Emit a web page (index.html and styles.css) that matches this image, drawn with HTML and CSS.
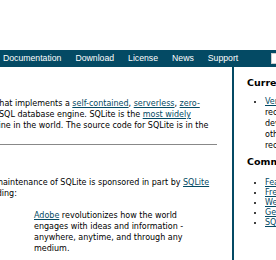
FILE: index.html
```html
<!DOCTYPE html>
<html lang="en">
<head>
    <meta charset="UTF-8">
    <title>SQLite Home Page</title>
    <link rel="stylesheet" href="styles.css">
</head>
<body>

<div class="banner"></div>

<nav class="menu">
    <a href="#">Documentation</a>
    <a href="#">Download</a>
    <a href="#">License</a>
    <a href="#">News</a>
    <a href="#">Support</a>
    <input class="search" type="text">
</nav>

<div class="main">
    <div class="content">
        <p class="intro">SQLite is a software library that implements a <a href="#">self-contained</a>, <a href="#">serverless</a>, <a href="#">zero-configuration</a>, <a href="#">transactional</a> SQL database engine. SQLite is the <a href="#">most widely deployed</a> SQL database engine in the world. The source code for SQLite is in the <a href="#">public domain</a>.</p>
        <hr>
        <p class="sponsors">Ongoing development and maintenance of SQLite is sponsored in part by <a href="#">SQLite Consortium</a> members, including:</p>
        <div class="sponsor">
            <div class="sponsor-logo"></div>
            <p><a href="#">Adobe</a> revolutionizes how the world engages with ideas and information - anywhere, anytime, and through any medium.</p>
        </div>
    </div>

    <div class="sidebar">
        <h3>Current Status</h3>
        <ul class="status">
            <li><a href="#">Version 3.7.4</a> of SQLite is<br>recommended for all new<br>development. Upgrading from all<br>other SQLite versions is<br>recommended.</li>
        </ul>
        <h3 class="second">Common Links</h3>
        <ul class="links">
            <li><a href="#">Features</a></li>
            <li><a href="#">Frequently Asked Questions</a></li>
            <li><a href="#">Well-known Users</a></li>
            <li><a href="#">Getting Started</a></li>
            <li><a href="#">SQL Syntax</a></li>
        </ul>
    </div>
</div>

</body>
</html>
```

FILE: styles.css
```css
/* Page frame */
html, body {
    margin: 0;
    overflow: hidden;
}
body {
    font-family: Verdana, "DejaVu Sans", sans-serif;
    font-size: 8px;
    line-height: 11px;
    color: #000;
    background-color: #fff;
}
a {
    color: #044a64;
}

.banner {
    height: 50px;
}

/* Top menu */
.menu {
    display: flex;
    align-items: center;
    gap: 14px;
    height: 17px;
    padding-left: 3px;
    background-color: #044a64;
    overflow: hidden;
}
.menu a {
    flex: none;
    font-family: Helvetica, "Liberation Sans", sans-serif;
    font-size: 8.7px;
    color: #fff;
    text-decoration: none;
}
.search {
    flex: none;
    width: 80px;
    height: 9px;
    margin-left: 19px;
    padding: 0;
    border: 1px solid #ccc;
    background-color: #fff;
}

/* Columns */
.main {
    display: flex;
    min-height: 193px;
}
.content {
    flex: none;
    width: 331px;
    margin-left: -114px;
}
.content p {
    margin: 0;
}
.intro {
    padding-top: 31px;
}
hr {
    margin: 2px 0 0;
    border: none;
    border-top: 1px solid #888;
}
.content .sponsors {
    margin-top: 32px;
}
.sponsor {
    display: flex;
    margin-top: 11px;
}
.sponsor-logo {
    flex: none;
    width: 148px;
}
.sponsor p {
    width: 160px;
}

/* Right column */
.sidebar {
    flex: none;
    width: 200px;
    margin-left: 15px;
    padding-left: 13px;
    border-left: 2px solid #044a64;
}
.sidebar h3 {
    margin: 10px 0 0;
    font-size: 9.5px;
    line-height: 12px;
}
.sidebar .second {
    margin-top: 5px;
}
.sidebar ul {
    margin: 0;
    padding-left: 18px;
}
.sidebar .status {
    margin-top: 7px;
}
.sidebar .links {
    margin-top: 10px;
    line-height: 10px;
}
```
